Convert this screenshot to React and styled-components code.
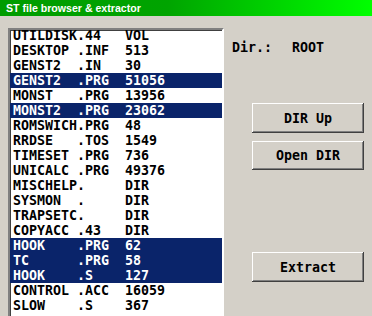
import React from 'react';
import styled, { createGlobalStyle } from 'styled-components';

const GlobalStyle = createGlobalStyle`
  html, body {
    margin: 0;
    padding: 0;
    background: #d4d0c8;
    overflow: hidden;
  }
`;

const files = [
  ['UTILDISK', '.44', 'VOL'],
  ['DESKTOP', '.INF', '513'],
  ['GENST2', '.IN', '30'],
  ['GENST2', '.PRG', '51056', true],
  ['MONST', '.PRG', '13956'],
  ['MONST2', '.PRG', '23062', true],
  ['ROMSWICH', '.PRG', '48'],
  ['RRDSE', '.TOS', '1549'],
  ['TIMESET', '.PRG', '736'],
  ['UNICALC', '.PRG', '49376'],
  ['MISCHELP', '.', 'DIR'],
  ['SYSMON', '.', 'DIR'],
  ['TRAPSETC', '.', 'DIR'],
  ['COPYACC', '.43', 'DIR'],
  ['HOOK', '.PRG', '62', true],
  ['TC', '.PRG', '58', true],
  ['HOOK', '.S', '127', true],
  ['CONTROL', '.ACC', '16059'],
  ['SLOW', '.S', '367'],
];

const Window = styled.div`
  width: 372px;
  height: 316px;
  background: #d4d0c8;
  display: flex;
  flex-direction: column;
  overflow: hidden;
`;

const TitleBar = styled.div`
  height: 16px;
  flex: none;
  display: flex;
  align-items: center;
  padding-left: 6px;
  background: linear-gradient(to right, #009c00 0%, #00a400 45%, #00ff00 100%);
  color: #fff;
  font-family: 'Liberation Sans', Arial, sans-serif;
  font-weight: bold;
  font-size: 10.6px;
`;

const Body = styled.div`
  display: flex;
  padding: 12px 0 0 8px;
`;

const ListBox = styled.div`
  width: 216px;
  height: 300px;
  box-sizing: border-box;
  background: #fff;
  border-style: solid;
  border-width: 2px;
  border-color: #808080 #fff #fff #808080;
  box-shadow: inset 1px 1px #404040;
  overflow: hidden;
`;

const Rows = styled.ul`
  list-style: none;
  margin: -2px 0 0 0;
  padding: 0;
`;

const Row = styled.li`
  display: flex;
  height: 15px;
  align-items: center;
  padding-left: 3px;
  background: ${p => (p.$selected ? '#0a246a' : 'transparent')};
  color: ${p => (p.$selected ? '#fff' : '#000')};
  font-family: 'DejaVu Sans Mono', 'Liberation Mono', monospace;
  font-weight: bold;
  font-size: 13.3px;
  white-space: pre;
`;

const Cell = styled.span`
  width: ${p => p.$w}px;
  flex: none;
`;

const Side = styled.div`
  display: flex;
  flex-direction: column;
  padding-top: 12px;
`;

const DirLine = styled.div`
  display: flex;
  gap: 20px;
  padding-left: 8px;
  height: 15px;
  align-items: center;
  font-family: 'DejaVu Sans Mono', 'Liberation Mono', monospace;
  font-weight: bold;
  font-size: 13.3px;
  color: #000;
`;

const Button = styled.button`
  width: 112px;
  height: ${p => p.$h || 30}px;
  margin: ${p => p.$top}px 0 0 28px;
  padding: 0;
  background: #d4d0c8;
  border: none;
  box-shadow: inset -1px -1px #404040, inset 1px 1px #fff, inset -2px -2px #808080;
  font-family: 'DejaVu Sans Mono', 'Liberation Mono', monospace;
  font-weight: bold;
  font-size: 13.3px;
  color: #000;
`;

export default function App() {
  return (
    <Window>
      <GlobalStyle />
      <TitleBar>ST file browser &amp; extractor</TitleBar>
      <Body>
        <ListBox>
          <Rows>
            {files.map(([name, ext, size, sel], i) => (
              <Row key={i} $selected={sel}>
                <Cell $w={64}>{name}</Cell>
                <Cell $w={48}>{ext}</Cell>
                <span>{size}</span>
              </Row>
            ))}
          </Rows>
        </ListBox>
        <Side>
          <DirLine>
            <span>Dir.:</span>
            <span>ROOT</span>
          </DirLine>
          <Button $top={48}>DIR Up</Button>
          <Button $top={8} $h={29}>Open DIR</Button>
          <Button $top={82}>Extract</Button>
        </Side>
      </Body>
    </Window>
  );
}
